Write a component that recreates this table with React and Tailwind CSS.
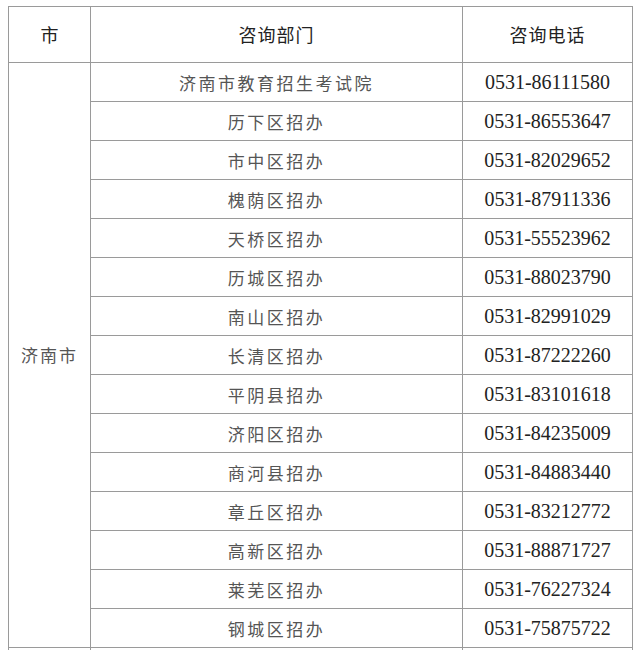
const rows = [
  ["济南市教育招生考试院", "0531-86111580"],
  ["历下区招办", "0531-86553647"],
  ["市中区招办", "0531-82029652"],
  ["槐荫区招办", "0531-87911336"],
  ["天桥区招办", "0531-55523962"],
  ["历城区招办", "0531-88023790"],
  ["南山区招办", "0531-82991029"],
  ["长清区招办", "0531-87222260"],
  ["平阴县招办", "0531-83101618"],
  ["济阳区招办", "0531-84235009"],
  ["商河县招办", "0531-84883440"],
  ["章丘区招办", "0531-83212772"],
  ["高新区招办", "0531-88871727"],
  ["莱芜区招办", "0531-76227324"],
  ["钢城区招办", "0531-75875722"],
];

const cjk = "font-['Noto_Sans_CJK_SC',sans-serif]";
const num = "font-['Liberation_Serif','Noto_Sans_CJK_SC',serif]";

export default function App() {
  return (
    <div className="w-[640px] h-[650px] overflow-hidden bg-white pt-[6px] pl-[8px]">
      <table className="table-fixed border-collapse w-[624px] text-center">
        <colgroup>
          <col className="w-[82px]" />
          <col className="w-[372px]" />
          <col className="w-[170px]" />
        </colgroup>
        <thead>
          <tr className="h-[56px]">
            <th className={`border border-[#9a9a9a] font-normal text-[18px] text-[#222] ${cjk}`}>市</th>
            <th className={`border border-[#9a9a9a] font-normal text-[18px] tracking-[1px] text-[#222] ${cjk}`}>咨询部门</th>
            <th className={`border border-[#9a9a9a] font-normal text-[18px] tracking-[1px] text-[#222] ${cjk}`}>咨询电话</th>
          </tr>
        </thead>
        <tbody>
          {rows.map(([dept, tel], i) => (
            <tr key={tel} className="h-[39px]">
              {i === 0 && (
                <td
                  rowSpan={rows.length}
                  className={`border border-[#9a9a9a] text-[17px] tracking-[2px] text-[#555] ${cjk}`}
                >
                  济南市
                </td>
              )}
              <td className={`border border-[#9a9a9a] text-[17px] tracking-[2.5px] text-[#555] leading-none ${cjk}`}>
                {dept}
              </td>
              <td className={`border border-[#9a9a9a] text-[20px] text-[#222] leading-none ${num}`}>
                {tel}
              </td>
            </tr>
          ))}
          <tr className="h-[39px]">
            <td className="border border-[#9a9a9a]"></td>
            <td className="border border-[#9a9a9a]"></td>
            <td className="border border-[#9a9a9a]"></td>
          </tr>
        </tbody>
      </table>
    </div>
  );
}
